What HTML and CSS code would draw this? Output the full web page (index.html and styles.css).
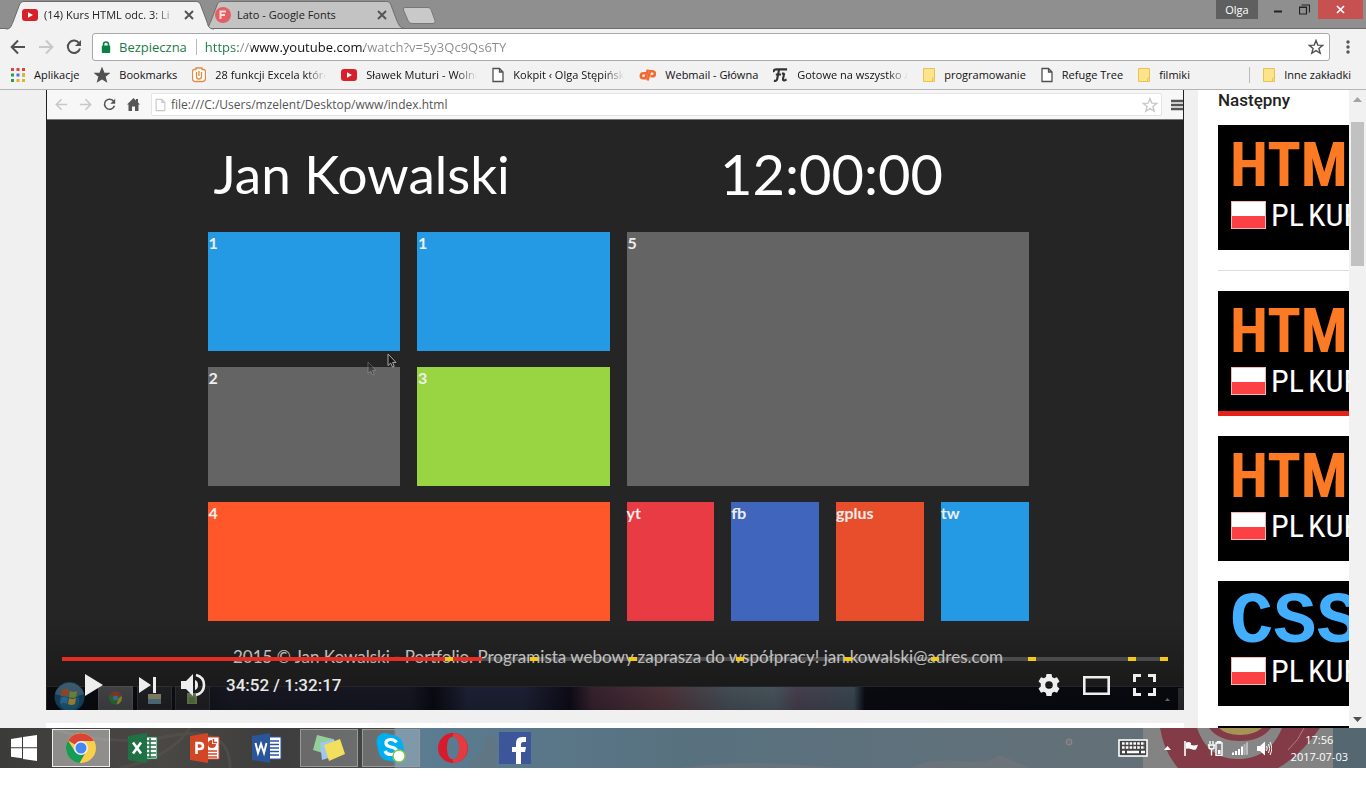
FILE: index.html
```html
<!DOCTYPE html>
<html lang="pl">
<head>
<meta charset="utf-8">
<title>(14) Kurs HTML odc. 3</title>
<link rel="stylesheet" href="styles.css">
</head>
<body>
<svg class="defs" aria-hidden="true">
  <symbol id="i-yt" viewBox="0 0 16 12"><rect width="16" height="12" rx="3" fill="#d8202a"/><path d="M6 3.2v5.6L11 6z" fill="#fff"/></symbol>
  <symbol id="i-x" viewBox="0 0 10 10"><path d="M1 1l8 8M9 1L1 9" stroke="#555" stroke-width="2" fill="none"/></symbol>
  <symbol id="i-back" viewBox="0 0 16 16"><path d="M15 8H2M8 1.5L1.7 8 8 14.5" stroke="currentColor" stroke-width="2" fill="none"/></symbol>
  <symbol id="i-reload" viewBox="0 0 16 16"><path d="M13.2 4.2A6.2 6.2 0 1 0 14 9.5" stroke="currentColor" stroke-width="2" fill="none"/><path d="M15 1v6H9z" fill="currentColor"/></symbol>
  <symbol id="i-doc" viewBox="0 0 12 16"><path d="M1 1.5h6.5L11 5v9.500H1zM7.500 1.500V5H11" fill="#fff" stroke="currentColor" stroke-width="1.300"/></symbol>
  <symbol id="i-folder" viewBox="0 0 12 16"><path d="M.5 1.500h11v10l-1 3H.5z" fill="#fce48a" stroke="#e6c353"/><path d="M9.500 14.500v-3l2-1v4z" fill="#fce48a" stroke="#e6c353"/></symbol>
  <symbol id="i-star" viewBox="0 0 16 16"><path d="M8 1.500l1.800 4.600 4.900.3-3.800 3.100 1.300 4.800L8 11.600l-4.200 2.700 1.300-4.800L1.300 6.400l4.900-.3z" fill="var(--fill,none)" stroke="currentColor" stroke-width="1.400"/></symbol>
  <symbol id="i-cursor" viewBox="0 0 10 15"><path d="M1 1v11.500l2.700-2.400 1.800 4 1.800-.8-1.700-3.900H9z" fill="#151515" stroke="#aaa"/></symbol>
</svg>

<div class="browser">
  <header class="tabstrip">
    <div class="tab">
      <svg class="shape" viewBox="0 0 204 28" preserveAspectRatio="none"><path d="M0 28C5 28 5 25 7 21L13 5C14 2 15 .5 18 .5H190C193 .5 194 2 195 5L201 21C202 25 203 28 208 28" fill="#f2f2f2" stroke="#6b6b6b"/></svg>
      <svg class="fav" width="16" height="12"><use href="#i-yt"/></svg>
      <span class="tab-title fade">(14) Kurs HTML odc. 3: Li</span>
      <button class="plain" aria-label="Zamknij kartę"><svg width="10" height="10"><use href="#i-x"/></svg></button>
    </div>
    <div class="tab inactive">
      <svg class="shape" viewBox="0 0 204 28" preserveAspectRatio="none"><path d="M0 28C5 28 5 25 7 21L13 5C14 2 15 .5 18 .5H186C189 .5 190 2 191 5L197 21C199 25 200 28 204 28" fill="#c3c3c3" stroke="#6b6b6b"/></svg>
      <svg class="fav" width="16" height="16" viewBox="0 0 16 16"><circle cx="8" cy="8" r="8" fill="#e45f62"/><path d="M5.500 12V4.500h5.500M5.500 8h4.500" stroke="#fbdcdc" stroke-width="2" fill="none"/></svg>
      <span class="tab-title">Lato - Google Fonts</span>
      <button class="plain" aria-label="Zamknij kartę"><svg width="10" height="10"><use href="#i-x"/></svg></button>
    </div>
    <button class="plain newtab" aria-label="Nowa karta"><svg width="34" height="17" viewBox="0 0 34 17"><path d="M3 .5h23q2 0 3 2l4 11q1 3-2 3H10q-3 0-4-3L1.500 3Q.5.500 3 .5z" fill="#c9c9c9" stroke="#777"/></svg></button>
    <div class="wincontrols">
      <button class="user">Olga</button>
      <button class="plain min" aria-label="Minimalizuj"><svg width="10" height="10"><path d="M1 8.500h8" stroke="#222" stroke-width="2"/></svg></button>
      <button class="plain max" aria-label="Przywróć"><svg width="11" height="11" viewBox="0 0 11 11"><path d="M.5 3h7v7h-7zM.5 3.500h7M2.500 1h8v7.500" fill="none" stroke="#222" stroke-width="1.200"/></svg></button>
      <button class="close" aria-label="Zamknij"><svg width="9" height="9" viewBox="0 0 9 9"><path d="M1 1l7 7M8 1L1 8" stroke="#fff" stroke-width="1.700"/></svg></button>
    </div>
  </header>

  <div class="toolbar">
    <button class="plain" aria-label="Wstecz"><svg width="16" height="16"><use href="#i-back"/></svg></button>
    <button class="plain dim flip" aria-label="Dalej"><svg width="16" height="16"><use href="#i-back"/></svg></button>
    <button class="plain" aria-label="Odśwież"><svg width="16" height="16"><use href="#i-reload"/></svg></button>
    <div class="omnibox">
      <svg width="10" height="12" viewBox="0 0 10 12"><path d="M2.500 5.500V3.500a2.500 2.500 0 0 1 5 0v2" fill="none" stroke="#0b8043" stroke-width="1.600"/><rect x=".8" y="4.500" width="8.400" height="7.500" rx="1" fill="#0b8043"/></svg>
      <span class="secure">Bezpieczna</span>
      <input class="url" aria-label="Adres" value="https://www.youtube.com/watch?v=5y3Qc9Qs6TY">
      <button class="plain" aria-label="Dodaj zakładkę"><svg width="16" height="16"><use href="#i-star"/></svg></button>
    </div>
    <button class="plain" aria-label="Menu"><svg width="4" height="14" viewBox="0 0 4 14"><g fill="#555"><circle cx="2" cy="2" r="1.700"/><circle cx="2" cy="7" r="1.700"/><circle cx="2" cy="12" r="1.700"/></g></svg></button>
  </div>

  <nav class="bookmarks" aria-label="Zakładki">
    <a href="#"><svg width="14" height="14" viewBox="0 0 14 14"><path d="M0 1.500h14" stroke="#d9453a" stroke-width="3" stroke-dasharray="3 2.500"/><path d="M0 7h3M11 7h3" stroke="#2e9c50" stroke-width="3"/><path d="M5.500 7h3" stroke="#4078dd" stroke-width="3"/><path d="M11 7h3" stroke="#eab02c" stroke-width="3"/><path d="M0 12.500h3" stroke="#2e9c50" stroke-width="3"/><path d="M5.500 12.500h9" stroke="#eab02c" stroke-width="3" stroke-dasharray="3 2.500"/></svg><span>Aplikacje</span></a>
    <a href="#"><svg class="solid" width="16" height="16"><use href="#i-star"/></svg><span>Bookmarks</span></a>
    <a href="#"><svg width="14" height="16" viewBox="0 0 14 16"><path d="M4 2.500V1h6v1.500h1.500q2 0 2 2v7q0 3-3 3h-7q-3 0-3-3v-7q0-2 2-2z" fill="#fff" stroke="#e58a3f" stroke-width="1.300"/><path d="M4.500 5v4.500q0 2.500 2.500 2.500t2.500-2.500V5M7 4v5" fill="none" stroke="#e58a3f" stroke-width="1.300"/></svg><span class="long fade">28 funkcji Excela które</span></a>
    <a href="#"><svg width="16" height="12"><use href="#i-yt"/></svg><span class="long fade">Sławek Muturi - Wolni</span></a>
    <a href="#"><svg width="12" height="16"><use href="#i-doc"/></svg><span class="long fade">Kokpit ‹ Olga Stępińska</span></a>
    <a href="#"><svg width="17" height="12" viewBox="0 0 17 12"><g fill="none" stroke="#f26a30" stroke-width="2.600"><path d="M7 4.200H4.500a2.500 2.500 0 0 0-.3 5h2.300L9 .5"/><path d="M8.500 11.500L11 2.300h2.300a2.400 2.400 0 0 1 0 5H11.500"/></g></svg><span>Webmail - Główna</span></a>
    <a href="#"><svg width="15" height="16" viewBox="0 0 16 16"><path d="M1 5Q0 2 4 2h11M6.500 2L4.500 12q-.5 3-3.500 2M3 7.500h5.500" fill="none" stroke="#333" stroke-width="2.300"/><path d="M12 6l-1.300 6q-.4 2 1.300 1.800l2.500-1M9.500 6.500H12" fill="none" stroke="#333" stroke-width="2.200"/></svg><span class="long fade">Gotowe na wszystko /</span></a>
    <a href="#"><svg width="12" height="16"><use href="#i-folder"/></svg><span>programowanie</span></a>
    <a href="#"><svg width="12" height="16"><use href="#i-doc"/></svg><span>Refuge Tree</span></a>
    <a href="#"><svg width="12" height="16"><use href="#i-folder"/></svg><span>filmiki</span></a>
    <a href="#" class="other"><svg width="12" height="16"><use href="#i-folder"/></svg><span>Inne zakładki</span></a>
  </nav>

  <div class="page">
    <main class="watch">
      <section class="video">
        <div class="inner-bar">
          <svg class="dim" width="13" height="13"><use href="#i-back"/></svg>
          <svg class="dim flip" width="13" height="13"><use href="#i-back"/></svg>
          <svg width="13" height="13"><use href="#i-reload"/></svg>
          <svg width="13" height="13" viewBox="0 0 13 13"><path d="M6.500 0L0 6.500h1.500V13H5V8.500h3V13h3.500V6.500H13L11 4.500V1H9v1.500z" fill="#555"/></svg>
          <div class="inner-address">
            <svg class="dim" width="11" height="14"><use href="#i-doc"/></svg>
            <input aria-label="Adres w filmie" value="file:///C:/Users/mzelent/Desktop/www/index.html">
            <svg class="dim" width="16" height="16"><use href="#i-star"/></svg>
          </div>
          <svg width="13" height="12" viewBox="0 0 13 12"><path d="M1 2h12M1 6h12M1 10h12" stroke="#555" stroke-width="2.600"/></svg>
        </div>
        <div class="site">
          <div class="headline"><h1>Jan Kowalski</h1><time>12:00:00</time></div>
          <div class="tiles">
            <div class="tile blue">1</div>
            <div class="tile blue">1</div>
            <div class="tile gray big">5</div>
            <div class="tile gray">2</div>
            <div class="tile green">3</div>
            <div class="tile orange wide">4</div>
            <div class="tile red small">yt</div>
            <div class="tile navy small">fb</div>
            <div class="tile brick small">gplus</div>
            <div class="tile blue small">tw</div>
            <svg class="cursor" width="10" height="17"><use href="#i-cursor"/></svg>
            <svg class="cursor ghost" width="10" height="17"><use href="#i-cursor"/></svg>
          </div>
          <p class="foot">2015 © Jan Kowalski - Portfolio. Programista webowy zaprasza do współpracy! jan.kowalski@adres.com</p>
        </div>
        <div class="inner-taskbar">
          <svg width="170" height="30" viewBox="0 0 170 30">
            <g fill="#5c5d60" stroke="#6d6e71"><path d="M51.500 6.500h34V30h-34z"/><path d="M90.500 6.500h34V30h-34zM128.500 6.500h34V30h-34z" fill="#2b2c30" stroke="#404248"/></g>
            <circle cx="22.500" cy="17" r="15" fill="#205a80"/><circle cx="22.500" cy="21" r="10" fill="#2690b8" opacity=".6"/><path d="M8 14a15 15 0 0 1 29 0q-14 6-29 0z" fill="#8ea2b2" opacity=".5"/>
            <path d="M15 10q4-2 7 0l-1 6q-3-2-7 0z" fill="#e0602f"/><path d="M23 11q3 2 7 0l-1 6q-4 2-7 0z" fill="#9cbf4c"/><path d="M14 18q3-2 7 0l-1 6q-3-2-7 0z" fill="#3d98d0"/><path d="M22 18q3 2 7 0l-1 6q-4 2-7 0z" fill="#f0bd42"/>
            <circle cx="68.500" cy="18" r="6.500" fill="#349448"/><path d="M62.500 16a6.500 6.500 0 0 1 12 0h-6z" fill="#c94439"/><path d="M74.500 16a6.500 6.500 0 0 1-5 8.500l2-6z" fill="#d8b83f"/><circle cx="68.500" cy="18" r="2.500" fill="#629bce"/>
            <rect x="101" y="14" width="13" height="10" fill="#bdb78c"/><rect x="101" y="19" width="13" height="5" fill="#759db5"/><rect x="140" y="13" width="10" height="11" fill="#94a37e"/><rect x="142" y="17" width="6" height="6" fill="#69a047"/>
          </svg>
          <svg class="corner" width="18" height="24" viewBox="0 0 18 24"><path d="M0 14l2.500-3L5 14z" fill="#999"/><path d="M13 1h5v23h-5z" fill="#3a3b42"/></svg>
        </div>
        <div class="player">
          <div class="progress">
            <div class="played"></div>
            <i class="ad" style="left:34.600%"></i><i class="ad" style="left:42.300%"></i><i class="ad" style="left:51.300%"></i><i class="ad" style="left:60.900%"></i><i class="ad" style="left:70.700%"></i><i class="ad" style="left:78.600%"></i><i class="ad" style="left:87.300%"></i><i class="ad" style="left:96.400%"></i><i class="ad" style="left:99.300%"></i>
          </div>
          <div class="controls">
            <button class="plain" aria-label="Odtwórz"><svg width="18" height="22" viewBox="0 0 18 22"><path d="M0 0l18 11L0 22z" fill="#eee"/></svg></button>
            <button class="plain next" aria-label="Następny"><svg width="18" height="16" viewBox="0 0 18 16"><path d="M0 0l12 8-12 8zM14 0h3v16h-3z" fill="#eee"/></svg></button>
            <button class="plain" aria-label="Wycisz"><svg width="26" height="24" viewBox="0 0 26 24"><path d="M1 8h5l7-7v22l-7-7H1z" fill="#eee"/><path d="M15 7v10q3-1 3-5t-3-5z" fill="#eee"/><path d="M16 2q8 2 8 10t-8 10" fill="none" stroke="#eee" stroke-width="2.600"/></svg></button>
            <span class="clocktime">34:52 / 1:32:17</span>
            <button class="plain settings" aria-label="Ustawienia"><svg width="22" height="22" viewBox="0 0 22 22"><path fill="#eee" fill-rule="evenodd" d="M8.500 0h5l.6 3 2 1.200 2.900-1 2.500 4.200-2.300 2v3.200l2.300 2-2.500 4.200-2.900-1-2 1.200-.6 3h-5l-.6-3-2-1.200-2.900 1L.5 14.600l2.300-2V9.400L.5 7.400 3 3.200l2.900 1L7.900 3zM11 7.200a3.800 3.800 0 1 0 0 7.600 3.800 3.800 0 0 0 0-7.600z"/></svg></button>
            <button class="plain" aria-label="Tryb kinowy"><svg width="27" height="19" viewBox="0 0 27 19"><path d="M1.300 1.300h24.400v16.400H1.300z" fill="none" stroke="#eee" stroke-width="2.600"/></svg></button>
            <button class="plain" aria-label="Pełny ekran"><svg width="23" height="22" viewBox="0 0 23 22"><path d="M1.500 8V1.500H8M15 1.500h6.500V8M21.500 14v6.500H15M8 20.500H1.500V14" fill="none" stroke="#eee" stroke-width="3"/></svg></button>
          </div>
        </div>
      </section>
      <section class="info"></section>
    </main>
    <aside class="next-list">
      <h2>Następny</h2>
      <a class="thumb" href="#"><b>HTML</b><span class="caption"><i class="flag"></i><span>PL</span><span>KURS</span></span></a>
      <hr>
      <a class="thumb seen" href="#"><b>HTML</b><span class="caption"><i class="flag"></i><span>PL</span><span>KURS</span></span></a>
      <a class="thumb" href="#"><b>HTML</b><span class="caption"><i class="flag"></i><span>PL</span><span>KURS</span></span></a>
      <a class="thumb css" href="#"><b>CSS</b><span class="caption"><i class="flag"></i><span>PL</span><span>KURS</span></span></a>
      <a class="thumb" href="#"></a>
    </aside>
    <div class="scrollbar">
      <svg width="9" height="5"><path d="M0 5l4.500-5L9 5z" fill="#a3a3a3"/></svg>
      <div class="handle"></div>
      <svg class="down" width="9" height="5"><path d="M0 0l4.500 5L9 0z" fill="#505050"/></svg>
    </div>
  </div>
</div>

<footer class="taskbar">
  <svg class="wallpaper" viewBox="0 0 1366 40" preserveAspectRatio="none">
    <defs><linearGradient id="wp"><stop offset="0" stop-color="#3b3b3a"/><stop offset=".12" stop-color="#4a4845"/><stop offset=".2" stop-color="#3d3d3d"/><stop offset=".288" stop-color="#454747"/><stop offset=".29" stop-color="#5b7d93"/><stop offset=".5" stop-color="#58717f"/><stop offset=".8" stop-color="#637078"/></linearGradient></defs>
    <rect width="1366" height="40" fill="url(#wp)"/>
    <path d="M50 0q60 20 120 8t60 32M190 0q-20 30-70 40" stroke="#5a5650" stroke-width="3" fill="none" opacity=".5"/>
    <path d="M468 40l15-20 8-18 8 20-5 18z" fill="#66747c" opacity=".5"/>
    <path d="M910 40q20-10 50-7t40-6l30 13zM680 40q60-8 120-3t90 3z" fill="#82777a" opacity=".35"/>
    <circle cx="1069" cy="14" r="3" fill="#76767a" stroke="#8b8b8b"/>
    <rect x="1143" width="190" height="40" fill="#838383"/>
    <path d="M1160 0h160q-20 28-42 40h-100q-14-16-18-40z" fill="#843b48"/>
    <path d="M1197 0h85q-12 30-43 31t-42-31z" fill="#868686"/><path d="M1209 0h62q-10 13-31 13t-31-13z" fill="#843b48"/><path d="M1219 0h43q-8 7-22 7t-21-7z" fill="#a69457"/>
    <path d="M1304 0q-5 12-16 22" stroke="#a8808a" fill="none"/>
    <rect x="1333" width="33" height="40" fill="#556872"/>
  </svg>
  <button class="task start" aria-label="Start"><svg width="26" height="26" viewBox="0 0 26 26"><path d="M0 4l11-1.700v10H0zM12 2l14-2v12.300H12zM0 13.300h11v10L0 21.700zM12 13.300h14V26l-14-2z" fill="#fff"/></svg></button>
  <button class="task active" aria-label="Chrome"><svg width="30" height="30" viewBox="0 0 30 30"><circle cx="15" cy="15" r="15" fill="#f9cf4c"/><path d="M15 15L2 7.500a15 15 0 0 1 26 .5H15z" fill="#da4437"/><path d="M2 7.500A15 15 0 0 0 13.500 30l7-12L9 18.500z" fill="#179c58"/><circle cx="15" cy="15" r="7" fill="#f1f1f1"/><circle cx="15" cy="15" r="5.500" fill="#4687f4"/></svg></button>
  <button class="task" aria-label="Excel"><svg width="30" height="30" viewBox="0 0 30 30"><path d="M16 4h13v22H16z" fill="#fff" stroke="#207245"/><path d="M18 8h10M18 12h10M18 16h10M18 20h10M18 24h10M22 5v20" stroke="#207245" stroke-width="1.500"/><path d="M0 3l19-3v30L0 27z" fill="#207245"/><path d="M5 9.500l8 11M13 9.500l-8 11" stroke="#fff" stroke-width="2.600"/></svg></button>
  <button class="task" aria-label="PowerPoint"><svg width="30" height="30" viewBox="0 0 30 30"><path d="M16 4h13v22H16z" fill="#fff" stroke="#d24625"/><path d="M18 18h9M18 21h9M18 24h9" stroke="#d24625" stroke-width="1.600"/><path d="M22 7a4 4 0 1 0 4 4h-4z" fill="#d24625"/><path d="M23.500 6v3.500H27" fill="none" stroke="#d24625" stroke-width="1.500"/><path d="M0 3l18-3v30L0 27z" fill="#d24625"/><path d="M6.500 21V10h3q3.500 0 3.500 3t-3.500 3h-3" stroke="#fff" stroke-width="2.600" fill="none"/></svg></button>
  <button class="task" aria-label="Word"><svg width="30" height="30" viewBox="0 0 30 30"><path d="M16 4h13v22H16z" fill="#fff" stroke="#2a5699"/><path d="M18 8h9M18 11.500h9M18 15h9M18 18.500h9M18 22h9" stroke="#2a5699" stroke-width="1.600"/><path d="M0 3l18-3v30L0 27z" fill="#2a5699"/><path d="M3.500 10l2.500 10 3-9 3 9 2.500-10" stroke="#fff" stroke-width="2" fill="none"/></svg></button>
  <button class="task open" aria-label="Notatki"><svg width="34" height="26" viewBox="0 0 34 26"><path d="M5 0l16 4-4 16L1 15z" fill="#93cf98"/><path d="M8 8l14-4 4 16-16 5z" fill="#9dc9ee"/><path d="M12 10l16-6 5 15-16 7z" fill="#f3df5e"/></svg></button>
  <button class="task open" aria-label="Skype"><svg width="30" height="30" viewBox="0 0 30 30"><path d="M8 0q4 0 6 1.500Q26 2 27.500 14q3 9-4 14-4 2-8 0Q3 28 2 16-3 3 8 0z" fill="#00aff0"/><path d="M20.500 9.500q-2-3.200-6-3-5 .4-4.500 4 .3 2.500 5 3.500 5.500 1 5.500 4 0 3.500-5.500 3.500-4.500 0-6-3.500" stroke="#fff" stroke-width="3.200" fill="none"/><circle cx="23" cy="23" r="6" fill="#fff" stroke="#8cc63e" stroke-width="1.400"/></svg></button>
  <button class="task" aria-label="Opera"><svg width="30" height="30" viewBox="0 0 30 30"><path fill="#d81b2c" fill-rule="evenodd" d="M15 0a15 15 0 0 0 0 30 15 15 0 0 0 0-30zm0 3.500c4 0 6 5 6 11.500s-2 11.500-6 11.500S9 21.500 9 15s2-11.500 6-11.500z"/><path d="M17 0.200a15 15 0 0 1 0 29.600q-3-.5-2-3.300c4 0 6-5 6-11.500S19 3.500 15 3.500q-1-3 2-3.300z" fill="#ef5a56" opacity=".5"/></svg></button>
  <button class="task" aria-label="Facebook"><svg width="32" height="32" viewBox="0 0 32 32"><path d="M0 0h32v32H0z" fill="#3d5599"/><path d="M17 32V20h-4v-5h4v-4q0-6 6-6h4v5h-3q-2 0-2 2v3h5l-1 5h-4v12z" fill="#fff"/></svg></button>
  <div class="tray">
    <svg width="30" height="18" viewBox="0 0 30 18"><rect x="1" y="1" width="28" height="16" fill="#444" stroke="#fff" stroke-width="1.600"/><path d="M4 4.500h23M4 8.500h23" stroke="#fff" stroke-width="2.400" stroke-dasharray="2.600 1.200"/><path d="M4 13h3M9 13h12M23 13h4" stroke="#fff" stroke-width="2.400"/></svg>
    <svg class="up" width="7" height="4"><path d="M0 4l3.500-4L7 4z" fill="#fff"/></svg>
    <svg width="15" height="15" viewBox="0 0 15 15"><path d="M1 0v15" stroke="#fff" stroke-width="1.600"/><path d="M2 1.500q3-1 5 .5v2q3 1 7-.2l-2 4.700q-3 .6-5-.5-2-1-5-.2z" fill="#fff"/></svg>
    <svg width="15" height="15" viewBox="0 0 15 15"><path d="M8 2h6v12.500H8zM9.500 2V.5h3V2M2 0v3M5 0v3M0 4h7M1 4v2.500q0 1.500 2.500 1.500T6 6.500V4M3.500 8v6.500" fill="none" stroke="#fff" stroke-width="1.400"/><path d="M10 9h2.500v4H10z" fill="#fff"/></svg>
    <svg width="16" height="13" viewBox="0 0 16 13"><path d="M1 13v-2.500M4 13V9M7 13V7" stroke="#fff" stroke-width="2"/><path d="M10 13V4.500" stroke="#fff" stroke-width="2"/><path d="M12 12.500v-10h1v10zM14.500 12.500V.5h1v12z" fill="none" stroke="#bbb"/></svg>
    <svg width="15" height="15" viewBox="0 0 15 15"><path d="M0 5h3l5-4.500v14L3 10H0z" fill="#fff"/><path d="M9.500 5q1.500 2.500 0 5M11.500 3q2.500 4.500 0 9M13 1q3.500 6.500 0 13" fill="none" stroke="#fff"/></svg>
    <div class="clock"><span>17:56</span><span>2017-07-03</span></div>
  </div>
</footer>
</body>
</html>
```

FILE: styles.css
```css
* { box-sizing: border-box; }

body {
  margin: 0;
  height: 100vh;
  padding-bottom: 39px;
  display: flex;
  flex-direction: column;
  overflow: hidden;
  background: #fff;
  color: #222;
  font: 12px/16px "Open Sans", "Noto Sans", sans-serif;
}

svg { display: block; flex: none; }
a { color: inherit; text-decoration: none; }
button { font: inherit; }
input { font: inherit; border: 0; padding: 0; background: none; outline: 0; min-width: 0; }
h1, h2, p { margin: 0; }

.defs { position: absolute; width: 0; height: 0; }
.plain { border: 0; padding: 0; background: none; color: #505050; flex: none; }
.dim { color: #c8c8c8; }
.flip { transform: scaleX(-1); }
.fade { -webkit-mask-image: linear-gradient(to right, #000 82%, transparent); mask-image: linear-gradient(to right, #000 82%, transparent); }

.browser { flex: 1; min-height: 0; display: flex; flex-direction: column; background: #f2f2f2; }

/* Tabs */
.tabstrip {
  height: 29px;
  flex: none;
  display: flex;
  align-items: flex-end;
  padding-left: 6px;
  background: #8f8f8f;
  border-bottom: 1px solid #6b6b6b;
}
.tab { position: relative; z-index: 2; width: 204px; height: 28px; margin-bottom: -1px; padding: 0 16px; display: flex; align-items: center; gap: 6px; }
.tab.inactive { z-index: 1; width: 200px; height: 27px; margin-bottom: 0; margin-left: -6px; padding: 0 17px 0 11px; }
.tab .shape { position: absolute; inset: 0; width: 100%; height: 100%; overflow: visible; }
.tab .fav, .tab-title, .tab button { position: relative; }
.tab-title { flex: 1; overflow: hidden; white-space: nowrap; font-size: 11px; }
.newtab { align-self: center; margin-top: 2px; margin-left: -2px; }
.wincontrols { margin-left: auto; margin-right: 3px; align-self: flex-start; display: flex; align-items: flex-start; }
.user { height: 19px; width: 42px; border: 0; padding: 0; background: #5f5f5f; color: #fff; font-size: 11px; }
.min { margin: 3px 0 0 15px; }
.max { margin: 4px 0 0 16px; }
.close { width: 45px; height: 19px; margin-left: 8px; border: 0; padding: 0; background: #c75050; display: grid; place-items: center; }

/* Toolbar */
.toolbar { flex: none; display: flex; align-items: center; gap: 12px; padding: 4px 16px 4px 10px; }
.toolbar > .plain:last-child { margin-left: 4px; }
.omnibox {
  flex: 1;
  height: 28px;
  display: flex;
  align-items: center;
  padding: 0 5px 0 8px;
  margin-left: -2px;
  border: 1px solid #a9a9a9;
  border-radius: 3px;
  background: #fff;
  font-size: 13px;
}
.secure { margin-left: 8px; padding-right: 9px; margin-right: 8px; border-right: 1px solid #bbb; color: #1c7c45; }
.url {
  flex: 1;
  background: linear-gradient(to right, #1c7c45 34px, #8a8a8a 34px, #8a8a8a 46px, #111 46px, #111 159px, #8a8a8a 159px);
  -webkit-background-clip: text;
  background-clip: text;
  color: transparent;
}

/* Bookmarks */
.bookmarks { flex: none; height: 25px; padding: 0 15px 4px 11px; display: flex; align-items: center; gap: 15px; border-bottom: 1px solid #b5b5b8; font-size: 11px; white-space: nowrap; }
.bookmarks a { display: flex; align-items: center; gap: 9px; color: #111; }
.bookmarks svg { color: #505050; }
.bookmarks .solid { --fill: #505050; }
.long { width: 111px; overflow: hidden; }
.bookmarks .other { margin-left: auto; padding-left: 13px; border-left: 1px solid #bbb; }

/* Page */
.page { flex: 1; min-height: 0; display: flex; background: #f0f0f0; overflow: hidden; }
.watch { flex: 1; min-width: 0; padding: 0 14px 0 46px; }
.video { position: relative; border-left: 1px solid #222; border-right: 1px solid #222; background: #252525; overflow: hidden; }
.info { margin-top: 13px; height: 120px; background: #fff; }

.inner-bar { height: 30px; display: flex; align-items: center; gap: 11px; padding-left: 8px; background: #f7f7f7; border-bottom: 1px solid #777; color: #555; }
.inner-address { flex: 1; height: 23px; display: flex; align-items: center; gap: 5px; padding: 0 3px; background: #fff; border: 1px solid #e4e4e4; border-radius: 2px; }
.inner-bar .inner-address { margin-right: -3px; }
.inner-address input { flex: 1; color: #555; font-size: 12px; }

.site { width: 827px; max-width: 100%; margin: 0 auto; padding-left: 6px; color: #eee; font-family: Lato, sans-serif; font-size: 16px; line-height: 20px; }
.headline { height: 112px; padding-bottom: 4px; display: grid; grid-template-columns: 1fr 402px; align-items: center; color: #fff; font-size: 56px; line-height: 64px; }
.headline h1 { padding-left: 6px; font-size: 53px; font-weight: 400; }
.headline time { text-align: center; padding-left: 8px; }
.tiles { position: relative; display: grid; grid-template-columns: repeat(8, 1fr); grid-auto-rows: 119px; gap: 16px 17px; }
.tile { grid-column: span 2; padding: 1px; font-weight: 700; }
.big { grid-column: 5 / 9; grid-row: 1 / 3; }
.wide { grid-column: span 4; }
.small { grid-column: span 1; padding-left: 0; }
.blue { background: #259ae4; }
.gray { background: #646464; }
.green { background: #99d543; }
.orange { background: #ff572a; }
.red { background: #e93b43; }
.navy { background: #4065bd; }
.brick { background: #e84e2b; }
.cursor { position: absolute; left: 179px; top: 120px; }
.cursor.ghost { left: 159px; top: 128px; opacity: .4; }
.foot { padding: 26px 0 19px; display: flex; justify-content: center; color: #e0e0e0; font-size: 17px; white-space: nowrap; }

.inner-taskbar {
  height: 24px;
  display: flex;
  justify-content: space-between;
  border-top: 1px solid #34363a;
  background: linear-gradient(to right, #0d0f15 10%, #20212f 16%, #1e202f 32%, #0d0d18 34%, #282d48 37%, #282d48 42%, #120f20 46%, #4b3040 48%, #6c4550 54%, #5f6d77 60%, #647480 64%, #63596d 66%, #506472 71%, #0e0e18 72%, #0b0d16);
}
.inner-taskbar svg { margin-top: -7px; }
.inner-taskbar .corner { margin-top: 0; }

.player { position: absolute; left: 0; right: 0; bottom: 0; padding: 40px 15px 13px; background: linear-gradient(transparent, rgba(0, 0, 0, .4)); }
.progress { position: relative; height: 4px; background: rgba(255, 255, 255, .2); }
.played { width: 38%; height: 100%; background: #e62d24; }
.ad { position: absolute; top: 0; width: 8px; height: 4px; background: #f5c912; }
.controls { display: flex; align-items: center; gap: 23px; height: 24px; margin-top: 12px; padding: 0 12px 0 23px; }
.controls .next { margin: 0 0 0 13px; }
.clocktime { margin-left: -3px; color: #e8e8e8; font: 500 17px/24px Roboto, sans-serif; }
.settings { margin-left: auto; }

/* Sidebar */
.next-list { width: 151px; flex: none; padding-left: 20px; background: #fff; overflow: hidden; }
.next-list h2 { height: 35px; color: #222; font: 500 17px/20px Roboto, sans-serif; }
.thumb { position: relative; display: block; height: 125px; width: 222px; margin-bottom: 20px; padding: 8px 0 0 12px; background: #000; color: #fff; overflow: hidden; }
.thumb b { display: block; height: 64px; color: #fd7a24; font: 700 62px/64px "Liberation Sans Narrow", "Roboto Condensed", sans-serif; }
.thumb.css b { color: #43aefd; font: 700 72px/68px "Liberation Mono", monospace; }
.caption { display: flex; align-items: center; gap: 4px; padding-left: 1px; font: 32px/36px "Liberation Sans Narrow", "Roboto Condensed", sans-serif; white-space: nowrap; }
.flag { width: 35px; height: 28px; margin-right: 1px; border: 1px solid #f3b5b5; background: linear-gradient(#fff 55%, #fb4144 55%); }
.seen { border-bottom: 5px solid #e62117; }
.next-list hr { margin: 0 0 20px; border: 0; border-top: 1px solid #ddd; }

.scrollbar { width: 17px; flex: none; display: flex; flex-direction: column; align-items: center; padding: 7px 0 6px; background: #f1f1f1; }
.handle { width: 13px; height: 144px; margin-top: 20px; background: #c1c1c1; }
.down { margin-top: auto; }

/* Windows taskbar */
.taskbar { position: relative; flex: none; height: 40px; display: flex; align-items: center; gap: 4px; overflow: hidden; color: #fff; }
.wallpaper { position: absolute; inset: 0; width: 100%; height: 100%; }
.task { position: relative; width: 58px; height: 38px; padding: 0; border: 0; background: none; display: grid; place-items: center; }
.start { width: 48px; }
.active { border: 1px solid #eee; background: rgba(255, 255, 255, .4); }
.open { border: 1px solid #999; background: rgba(255, 255, 255, .22); }
.tray { position: relative; margin-left: auto; padding-right: 18px; display: flex; align-items: center; gap: 9px; }
.tray .up { margin: 0 4px 0 7px; }
.clock { margin-left: 10px; display: flex; flex-direction: column; align-items: center; font-size: 11px; line-height: 17px; }
```
